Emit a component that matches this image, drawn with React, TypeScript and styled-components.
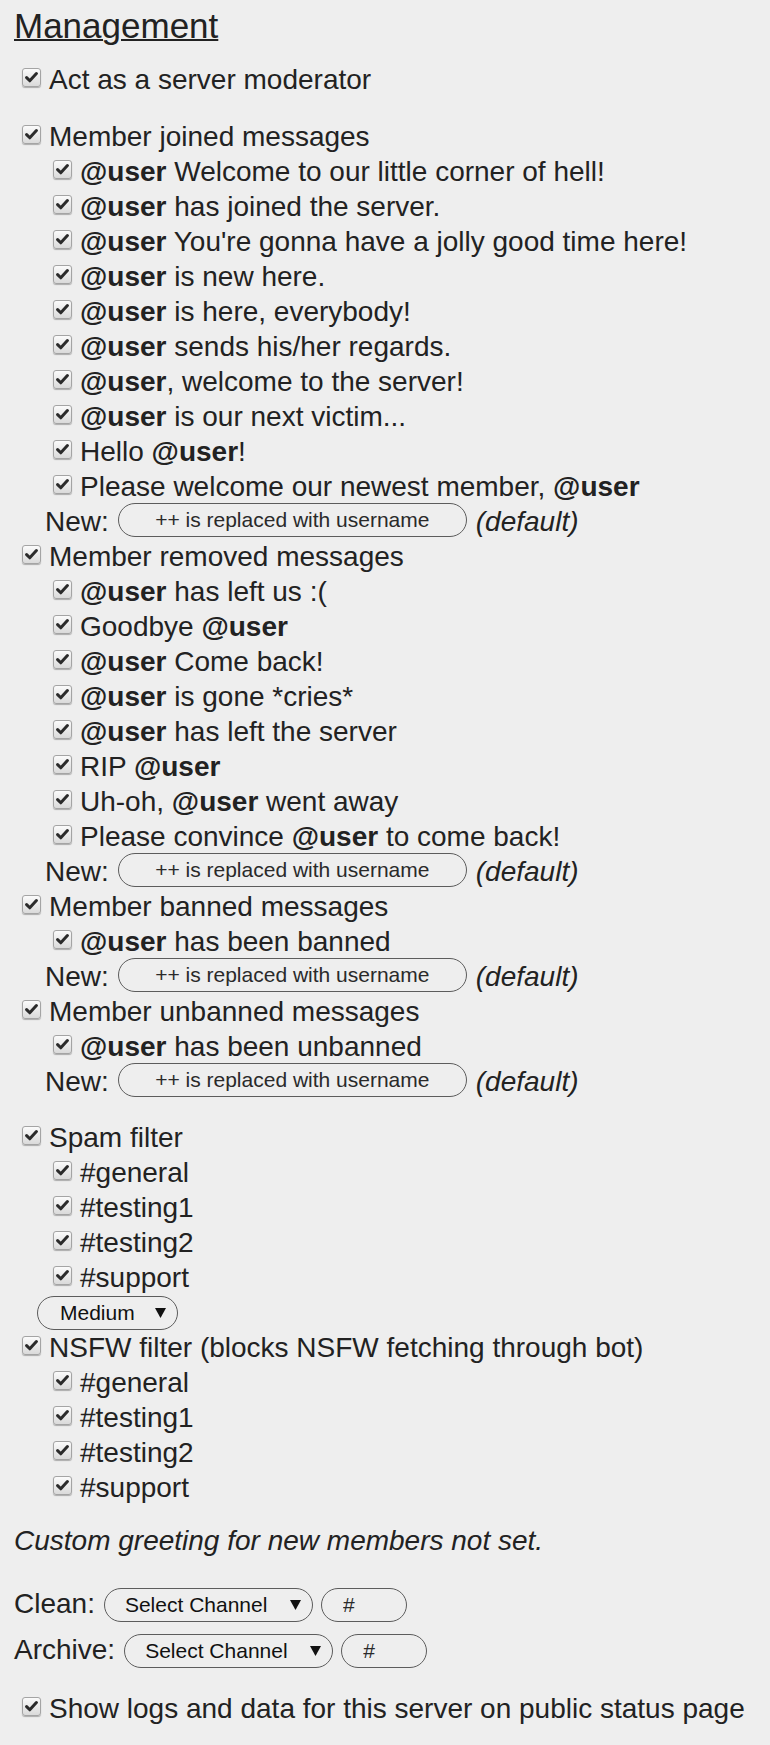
import React from 'react';
import styled, {createGlobalStyle} from 'styled-components';

const GlobalStyle = createGlobalStyle`
  html, body {
    margin: 0;
    background: #eeeeee;
  }

  body {
    font-family: "Liberation Sans", Arial, sans-serif;
    color: #222222;
  }
`;

const Page = styled.div`
  padding: 6px 14px 19px;
  font-size: 28px;
  line-height: 35px;
`;

const Title = styled.h2`
  margin: 0 0 16px;
  font-size: 35px;
  line-height: 40px;
  font-weight: normal;
  text-decoration: underline;
  text-decoration-thickness: 2px;
`;

const Group = styled.div<{ $gap?: number }>`
  margin-top: ${p => p.$gap ?? 0}px;
`;

const Row = styled.label<{ $sub?: boolean }>`
  display: flex;
  align-items: center;
  height: 35px;
  padding-left: ${p => (p.$sub ? 39 : 8)}px;
  white-space: nowrap;
`;

const Box = styled.span`
  flex: none;
  box-sizing: border-box;
  width: 19px;
  height: 19px;
  margin: 0 8px 4px 0;
  border: 1px solid #a4a4a4;
  border-radius: 3px;
  background: linear-gradient(#fbfbfb, #dadada);
  box-shadow: 0 1px 1px rgba(0, 0, 0, 0.28);
  display: flex;
  align-items: center;
  justify-content: center;
`;

const User = styled.b`
  font-weight: bold;
`;

const NewRow = styled.div`
  display: flex;
  align-items: center;
  gap: 9px;
  height: 35px;
  padding-left: 31px;
  white-space: nowrap;
`;

const Pill = styled.input<{ $width: number; $center?: boolean }>`
  box-sizing: border-box;
  width: ${p => p.$width}px;
  height: 34px;
  margin: 0 0 3px;
  padding: 0 ${p => (p.$center ? 0 : 21)}px;
  border: 1px solid #5c5c5c;
  border-radius: 17px;
  background: transparent;
  font-family: "Liberation Sans", Arial, sans-serif;
  font-size: 21px;
  color: #222222;
  text-align: ${p => (p.$center ? 'center' : 'left')};
  outline: none;

  &::placeholder {
    color: #2a2a2a;
    opacity: 1;
  }
`;

const Hint = styled.i`
  font-style: italic;
`;

const Picker = styled.div<{ $width: number; $pad: number }>`
  box-sizing: border-box;
  flex: none;
  width: ${p => p.$width}px;
  height: 34px;
  padding: 0 11px 0 ${p => p.$pad}px;
  border: 1px solid #5c5c5c;
  border-radius: 17px;
  display: flex;
  align-items: center;
  justify-content: space-between;
  font-size: 21px;
  line-height: 24px;
  color: #111111;
`;

const LevelRow = styled.div`
  display: flex;
  align-items: center;
  height: 35px;
  padding-left: 23px;
`;

const Note = styled.p`
  margin: 18px 0 0;
  font-style: italic;
`;

const Fields = styled.div`
  margin-top: 24px;
`;

const FieldRow = styled.div`
  display: flex;
  align-items: center;
  gap: 9px;
  height: 46px;

  > span {
    margin-bottom: 4px;
  }

  > input {
    margin: 0 0 0 -1px;
  }
`;

const Tick = () => (
    <svg width="13" height="11" viewBox="0 0 13 11">
        <path d="M1.6 5.6 L4.8 8.8 L11.4 1.6" fill="none" stroke="#2b2b2b" strokeWidth="3"
              strokeLinecap="round" strokeLinejoin="round"/>
    </svg>
);

const Caret = () => (
    <svg width="11" height="10" viewBox="0 0 11 10">
        <path d="M0 0 H11 L5.5 10 Z" fill="#111111"/>
    </svg>
);

// bold every @user mention inside a message
const Message = ({text}: { text: string }) => (
    <span>
        {text.split(/(@user)/).map((part, i) =>
            part === '@user' ? <User key={i}>{part}</User> : <React.Fragment key={i}>{part}</React.Fragment>
        )}
    </span>
);

const Option = ({text, sub}: { text: string; sub?: boolean }) => (
    <Row $sub={sub}>
        <Box><Tick/></Box>
        <Message text={text}/>
    </Row>
);

const NewMessage = () => (
    <NewRow>
        <span>New:</span>
        <Pill $width={349} $center placeholder="++ is replaced with username"/>
        <Hint>(default)</Hint>
    </NewRow>
);

const joined = [
    '@user Welcome to our little corner of hell!',
    '@user has joined the server.',
    "@user You're gonna have a jolly good time here!",
    '@user is new here.',
    '@user is here, everybody!',
    '@user sends his/her regards.',
    '@user, welcome to the server!',
    '@user is our next victim...',
    'Hello @user!',
    'Please welcome our newest member, @user',
];

const removed = [
    '@user has left us :(',
    'Goodbye @user',
    '@user Come back!',
    '@user is gone *cries*',
    '@user has left the server',
    'RIP @user',
    'Uh-oh, @user went away',
    'Please convince @user to come back!',
];

const channels = ['#general', '#testing1', '#testing2', '#support'];

const App: React.FC = () => {
    return (
        <Page>
            <GlobalStyle/>
            <Title>Management</Title>

            <Option text="Act as a server moderator"/>

            <Group $gap={22}>
                <Option text="Member joined messages"/>
                {joined.map(m => <Option key={m} text={m} sub/>)}
                <NewMessage/>

                <Option text="Member removed messages"/>
                {removed.map(m => <Option key={m} text={m} sub/>)}
                <NewMessage/>

                <Option text="Member banned messages"/>
                <Option text="@user has been banned" sub/>
                <NewMessage/>

                <Option text="Member unbanned messages"/>
                <Option text="@user has been unbanned" sub/>
                <NewMessage/>
            </Group>

            <Group $gap={21}>
                <Option text="Spam filter"/>
                {channels.map(c => <Option key={c} text={c} sub/>)}
                <LevelRow>
                    <Picker $width={141} $pad={22}>
                        <span>Medium</span>
                        <Caret/>
                    </Picker>
                </LevelRow>
                <Option text="NSFW filter (blocks NSFW fetching through bot)"/>
                {channels.map(c => <Option key={'n' + c} text={c} sub/>)}
            </Group>

            <Note>Custom greeting for new members not set.</Note>

            <Fields>
                <FieldRow>
                    <span>Clean:</span>
                    <Picker $width={209} $pad={20}>
                        <span>Select Channel</span>
                        <Caret/>
                    </Picker>
                    <Pill $width={86} placeholder="#"/>
                </FieldRow>
                <FieldRow>
                    <span>Archive:</span>
                    <Picker $width={209} $pad={20}>
                        <span>Select Channel</span>
                        <Caret/>
                    </Picker>
                    <Pill $width={86} placeholder="#"/>
                </FieldRow>
            </Fields>

            <Group $gap={17}>
                <Option text="Show logs and data for this server on public status page"/>
            </Group>
        </Page>
    );
};

export default App;
